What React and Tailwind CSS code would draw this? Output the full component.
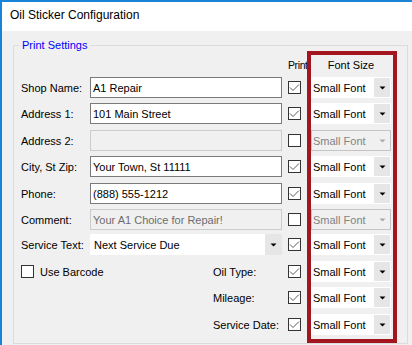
import React from "react";

const Check = ({ checked }) => (
  <div className="w-[13px] h-[13px] border border-[#333333] bg-white flex items-center justify-center shrink-0">
    {checked && (
      <svg width="11" height="11" viewBox="0 0 11 11">
        <polyline points="1,5.5 4,8.5 10,2.5" fill="none" stroke="#5c5c5c" strokeWidth="1" />
      </svg>
    )}
  </div>
);

const Arrow = ({ color = "#000" }) => (
  <svg width="7" height="4" viewBox="0 0 7 4">
    <polygon points="0.5,0.5 6.5,0.5 3.5,3.5" fill={color} />
  </svg>
);

const FontCombo = ({ disabled }) =>
  disabled ? (
    <div className="w-[80px] h-[21px] border border-[#c4c4c4] bg-[#f0f0f0] flex items-center shrink-0">
      <span className="pl-[1px] flex-1 text-[#838383]">Small Font</span>
      <div className="w-[16px] h-full flex items-center justify-center">
        <Arrow color="#a8a8a8" />
      </div>
    </div>
  ) : (
    <div className="w-[80px] h-[21px] bg-white flex items-center shrink-0">
      <span className="pl-[2px] flex-1 text-black">Small Font</span>
      <div className="w-[16px] h-[19px] mr-[1px] bg-[#e6e6e6] flex items-center justify-center">
        <Arrow />
      </div>
    </div>
  );

const TextBox = ({ value, disabled }) =>
  disabled ? (
    <div className="w-[192px] h-[21px] border border-[#cccccc] bg-[#f0f0f0] flex items-center pl-[2px] text-[#6d6d6d] shrink-0">
      {value}
    </div>
  ) : (
    <div className="w-[192px] h-[21px] border border-[#7a7a7a] bg-white flex items-center pl-[2px] text-black shrink-0">
      {value}
    </div>
  );

const Row = ({ label, children, checked, disabled, className = "" }) => (
  <div className={`flex items-center h-[21px] ${className}`}>
    <div className="w-[69px] shrink-0 text-black">{label}</div>
    {children}
    <div className="w-[6px] shrink-0" />
    <Check checked={checked} />
    <div className="w-[10px] shrink-0" />
    <FontCombo disabled={disabled} />
  </div>
);

const RightRow = ({ label, left, className = "" }) => (
  <div className={`flex items-center h-[21px] ${className}`}>
    <div className="w-[192px] shrink-0 flex items-center">{left}</div>
    <div className="w-[75px] shrink-0 text-black">{label}</div>
    <Check checked />
    <div className="w-[10px] shrink-0" />
    <FontCombo />
  </div>
);

export default function App() {
  return (
    <div className="w-[412px] h-[345px] bg-[#f0f0f0] border-l-2 border-[#1883d7] flex flex-col overflow-hidden font-['Liberation_Sans',Arial,sans-serif] text-[11px] leading-[14px]">
      <div className="h-[31px] shrink-0 bg-white border-t-2 border-[#1883d7] pl-[8px] pt-[6px] text-[12px] leading-[14px] text-black">
        Oil Sticker Configuration
      </div>
      <div className="ml-[11px] mt-[14px] w-[395px] h-[299px] border border-[#dcdcdc] relative">
        <span className="absolute left-[5px] top-[-8px] px-[3px] bg-[#f0f0f0] text-[#0000ff] leading-[14px]">
          Print Settings
        </span>
        <div className="pl-[7px] flex flex-col">
          <div className="h-[31px] pt-[12px] flex">
            <div className="w-[267px] shrink-0" />
            <div className="w-[23px] shrink-0 text-black text-[10.5px] tracking-[-0.4px]">Print</div>
            <div className="w-[80px] shrink-0 text-center text-black">Font Size</div>
          </div>
          <Row label="Shop Name:" checked>
            <TextBox value="A1 Repair" />
          </Row>
          <Row label="Address 1:" checked className="mt-[5px]">
            <TextBox value="101 Main Street" />
          </Row>
          <Row label="Address 2:" disabled className="mt-[6px]">
            <TextBox value="" disabled />
          </Row>
          <Row label="City, St Zip:" checked className="mt-[5px]">
            <TextBox value="Your Town, St 11111" />
          </Row>
          <Row label="Phone:" checked className="mt-[6px]">
            <TextBox value="(888) 555-1212" />
          </Row>
          <Row label="Comment:" disabled className="mt-[5px]">
            <TextBox value="Your A1 Choice for Repair!" disabled />
          </Row>
          <Row label="Service Text:" checked className="mt-[4px]">
            <div className="w-[192px] h-[21px] bg-white flex items-center shrink-0">
              <span className="pl-[4px] flex-1 text-black">Next Service Due</span>
              <div className="w-[17px] h-[21px] bg-[#e6e6e6] flex items-center justify-center">
                <Arrow />
              </div>
            </div>
          </Row>
          <RightRow
            label="Oil Type:"
            className="mt-[6px]"
            left={
              <>
                <Check />
                <span className="ml-[6px] text-black">Use Barcode</span>
              </>
            }
          />
          <RightRow label="Mileage:" className="mt-[5px]" />
          <RightRow label="Service Date:" className="mt-[6px]" />
        </div>
        <div className="absolute left-[293px] top-[5px] w-[90px] h-[292px] border-4 border-[#a3161f] pointer-events-none" />
      </div>
    </div>
  );
}
